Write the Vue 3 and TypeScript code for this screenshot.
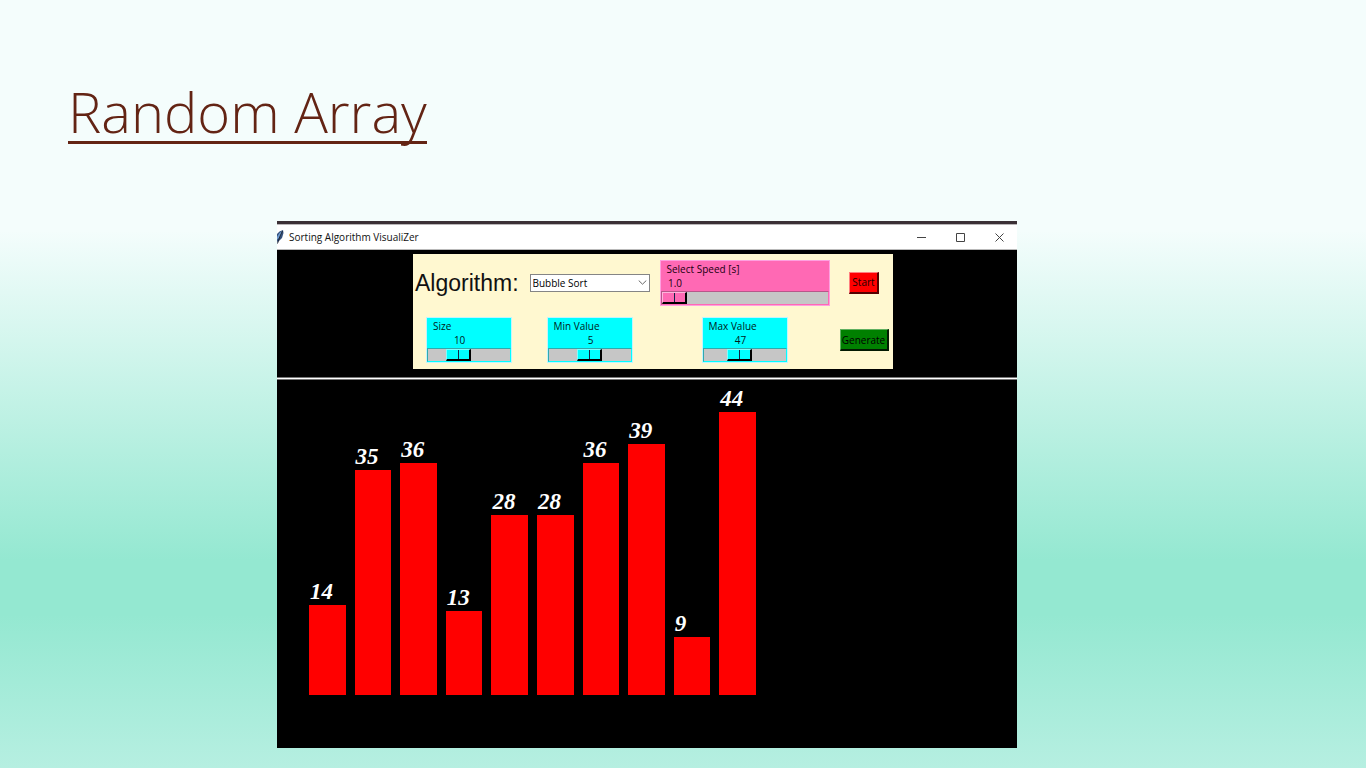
<script setup lang="ts">
import { computed, ref } from 'vue'

interface Scale {
  id: string
  label: string
  min: number
  max: number
  step: number
  value: number
  digits: number
}

const algorithms = ['Bubble Sort', 'Merge Sort', 'Quick Sort']
const algorithm = ref('Bubble Sort')

const speed = ref<Scale>({ id: 'speed', label: 'Select Speed [s]', min: 1, max: 5, step: 0.1, value: 1, digits: 1 })
const scales = ref<Scale[]>([
  { id: 'size', label: 'Size', min: 3, max: 25, step: 1, value: 10, digits: 0 },
  { id: 'min', label: 'Min Value', min: 0, max: 10, step: 1, value: 5, digits: 0 },
  { id: 'max', label: 'Max Value', min: 10, max: 100, step: 1, value: 47, digits: 0 },
])

const data = ref<number[]>([14, 35, 36, 13, 28, 28, 36, 39, 9, 44])
const peak = computed(() => Math.max(...data.value))

const fraction = (s: Scale): number => (s.value - s.min) / (s.max - s.min)
const valueOffset = (s: Scale) => ({ marginLeft: `calc((100% - 27px) * ${fraction(s).toFixed(3)})` })
const barHeight = (v: number) => ({ height: `${((v / peak.value) * 100).toFixed(2)}%` })

function generate(): void {
  const [size, min, max] = scales.value.map((s) => s.value)
  data.value = Array.from({ length: size }, () => min + Math.floor(Math.random() * (max - min + 1)))
}

function start(): void {
  data.value = [...data.value].sort((a, b) => a - b)
}
</script>

<template>
  <main class="slide">
    <h1 class="title">Random Array</h1>

    <section class="window">
      <header class="titlebar">
        <svg class="feather" viewBox="0 0 8 14" aria-hidden="true">
          <path d="M0 4 L2.500 1.500 L6 0 L6.500 3 L5 8 L2 11 L0 12 Z" fill="#34507c" />
          <path d="M0 7 L2.500 3 L5 1 L4 5 L1 9 L0 9.500 Z" fill="#6f9bd0" />
          <path d="M5.500 1 Q3 5 .5 13.500" fill="none" stroke="#1d2636" stroke-width="1" />
        </svg>
        <span class="caption">Sorting Algorithm VisualiZer</span>
        <button class="control" type="button" aria-label="Minimize">
          <svg viewBox="0 0 9 9"><path d="M0 4.500H9" /></svg>
        </button>
        <button class="control" type="button" aria-label="Maximize">
          <svg viewBox="0 0 9 9"><path d="M.5 .5H8.500V8.500H.5Z" /></svg>
        </button>
        <button class="control" type="button" aria-label="Close">
          <svg viewBox="0 0 9 9"><path d="M.5 .5L8.500 8.500M8.500 .5L.5 8.500" /></svg>
        </button>
      </header>

      <div class="top">
        <form class="panel" @submit.prevent>
          <label class="algo-label" for="algorithm">Algorithm:</label>
          <div class="combo">
            <select id="algorithm" v-model="algorithm">
              <option v-for="a in algorithms" :key="a">{{ a }}</option>
            </select>
            <svg class="chevron" viewBox="0 0 9 5" aria-hidden="true"><path d="M.7 .5L4.500 4.200L8.300 .5" /></svg>
          </div>
          <div class="scale pink">
            <label :for="speed.id">{{ speed.label }}</label>
            <output :for="speed.id" :style="valueOffset(speed)">{{ speed.value.toFixed(speed.digits) }}</output>
            <input :id="speed.id" v-model.number="speed.value" type="range" :min="speed.min" :max="speed.max" :step="speed.step" />
          </div>
          <button class="action start" type="button" @click="start">Start</button>

          <div v-for="s in scales" :key="s.id" class="scale cyan">
            <label :for="s.id">{{ s.label }}</label>
            <output :for="s.id" :style="valueOffset(s)">{{ s.value.toFixed(s.digits) }}</output>
            <input :id="s.id" v-model.number="s.value" type="range" :min="s.min" :max="s.max" :step="s.step" />
          </div>
          <button class="action generate" type="button" @click="generate">Generate</button>
        </form>
      </div>

      <div class="canvas">
        <div class="bars">
          <div v-for="(v, i) in data" :key="i" class="column">
            <span class="number">{{ v }}</span>
            <div class="bar" :style="barHeight(v)"></div>
          </div>
        </div>
      </div>
    </section>
  </main>
</template>

<style>
body {
  margin: 0;
}
</style>

<style scoped>
.slide {
  box-sizing: border-box;
  min-height: 100vh;
  display: flex;
  flex-direction: column;
  padding: 76px 349px 20px 277px;
  background: linear-gradient(#f4fdfc 0%, #f4fdfc 30%, #94e8d1 73%, #94e8d1 80%, #b6efe1 100%);
  font-family: 'Open Sans', 'Noto Sans', sans-serif;
}

.title {
  align-self: flex-start;
  height: 65px;
  margin: 0 0 77px -209px;
  border-bottom: 3px solid #632414;
  color: #632414;
  font: 300 56px/71px 'Open Sans', 'Noto Sans', sans-serif;
  white-space: nowrap;
}

.window {
  flex: 1;
  display: flex;
  flex-direction: column;
  background: #000;
  border-top: 3px solid #3b3036;
}

.titlebar {
  display: flex;
  align-items: center;
  box-sizing: border-box;
  height: 26px;
  padding-right: 13px;
  gap: 30px;
  background: #fff;
  border-top: 1px solid #b9b6b8;
  border-bottom: 1px solid #b9b9b9;
}

.feather {
  width: 8px;
  height: 14px;
  margin-right: -26px;
}

.caption {
  flex: 1;
  color: #111;
  font-size: 10px;
  line-height: 14px;
}

.control {
  width: 9px;
  height: 9px;
  padding: 0;
  border: 0;
  background: none;
}

.control svg {
  display: block;
  width: 9px;
  height: 9px;
  fill: none;
  stroke: #444;
  stroke-width: 1;
}

.top {
  display: flex;
  justify-content: center;
  padding: 4px 0 8px 12px;
  border-bottom: 1px solid #777;
}

.panel {
  display: grid;
  grid-template-columns: 112px 129px 181px 58px;
  grid-template-rows: 57px 58px;
  align-items: center;
  justify-items: center;
  background: #fff8d0;
}

.algo-label {
  justify-self: start;
  padding-left: 2px;
  color: #111;
  font: 23px/28px 'Liberation Sans', Arial, sans-serif;
}

.combo {
  display: grid;
  align-items: center;
  width: 120px;
}

.combo select {
  grid-area: 1 / 1;
  appearance: none;
  box-sizing: border-box;
  width: 100%;
  height: 18px;
  padding: 0 16px 0 2px;
  border: 1px solid #858585;
  border-radius: 0;
  background: #fff;
  color: #000;
  font: 10px/14px 'Open Sans', 'Noto Sans', sans-serif;
}

.chevron {
  grid-area: 1 / 1;
  justify-self: end;
  width: 9px;
  height: 5px;
  margin-right: 3px;
  fill: none;
  stroke: #666;
  stroke-width: 1;
  pointer-events: none;
}

.scale {
  box-sizing: border-box;
  width: 86px;
  display: flex;
  flex-direction: column;
  padding-top: 1px;
  border: 1px solid #bff4ff;
  background: var(--face);
  color: #001a1a;
  font-size: 10px;
  line-height: 14px;
}

.cyan {
  --face: #00ffff;
  --light: #7dffff;
  --shade: #2fa9ad;
}

.pink {
  --face: #ff69b4;
  --light: #ffb4dc;
  --shade: #b8578a;
  width: 170px;
  border-color: #ffa0e0;
  color: #1a0010;
}

.scale label {
  padding-left: 6px;
}

.scale output {
  width: 29px;
  text-align: center;
}

.scale input {
  appearance: none;
  box-sizing: border-box;
  width: 100%;
  height: 14px;
  margin: 1px 0 0;
  border: 1px solid var(--face);
  border-top-color: var(--shade);
  border-left-color: var(--shade);
  background: #c6c6c6;
}

.scale input::-webkit-slider-thumb {
  appearance: none;
  box-sizing: border-box;
  width: 25px;
  height: 12px;
  border: 1px solid #000;
  border-top-color: var(--light);
  border-left-color: var(--light);
  border-right-width: 2px;
  border-bottom-width: 2px;
  background: linear-gradient(90deg, var(--face) 11px, #124 11px, #124 12px, var(--face) 12px);
}

.action {
  box-sizing: border-box;
  height: 22px;
  padding: 0;
  border: 1px solid #000;
  border-right-width: 2px;
  border-bottom-width: 2px;
  font: 10px/14px 'Open Sans', 'Noto Sans', sans-serif;
}

.start {
  width: 30px;
  background: #ff0000;
  border-color: #ff8080 #500 #500 #ff8080;
  color: #200;
}

.generate {
  width: 49px;
  background: #008000;
  border-color: #60b060 #021a02 #021a02 #60b060;
  color: #000;
}

.canvas {
  flex: 1;
  display: flex;
  flex-direction: column;
  padding: 33px 261px 53px 32px;
  border-top: 1px solid #fff;
  box-shadow: inset 0 1px #777;
}

.bars {
  flex: 1;
  display: flex;
  gap: 9px;
}

.column {
  flex: 1 1 0;
  min-width: 0;
  display: flex;
  flex-direction: column;
  justify-content: flex-end;
}

.number {
  height: 24px;
  margin: -25px 0 1px 1px;
  color: #fff;
  font: italic bold 23px/24px 'Liberation Serif', 'Times New Roman', serif;
}

.bar {
  flex: none;
  background: #ff0000;
}
</style>
